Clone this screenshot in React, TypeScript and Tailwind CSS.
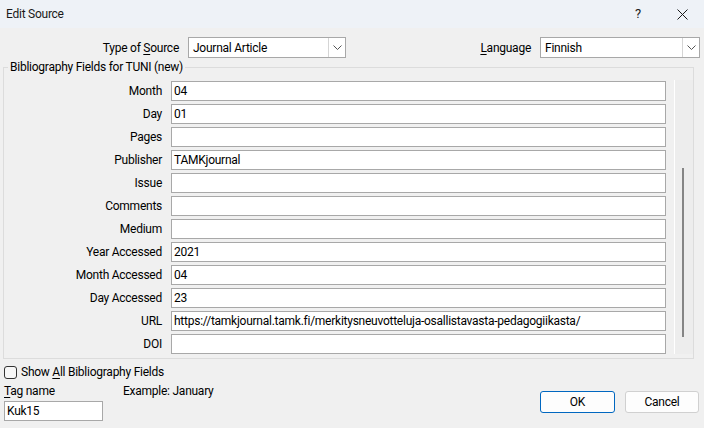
import React from "react";

const font = { fontFamily: 'Roboto, "Noto Sans", sans-serif' };

function Combo({ value, width }: { value: string; width: string }) {
  return (
    <div className={`${width} h-[21px] bg-white border border-[#a8a8a8] flex items-center`}>
      <div className="flex-1 pl-[4px] text-[12px] leading-[16px] text-black">{value}</div>
      <div className="w-[17px] h-[19px] border-l border-[#d5d5d5] flex items-center justify-center">
        <svg width="9" height="5" viewBox="0 0 9 5">
          <path d="M0.5 0.5 L4.5 4.5 L8.5 0.5" fill="none" stroke="#555" strokeWidth="1" />
        </svg>
      </div>
    </div>
  );
}

const rows: [string, string][] = [
  ["Month", "04"],
  ["Day", "01"],
  ["Pages", ""],
  ["Publisher", "TAMKjournal"],
  ["Issue", ""],
  ["Comments", ""],
  ["Medium", ""],
  ["Year Accessed", "2021"],
  ["Month Accessed", "04"],
  ["Day Accessed", "23"],
  ["URL", "https://tamkjournal.tamk.fi/merkitysneuvotteluja-osallistavasta-pedagogiikasta/"],
  ["DOI", ""],
];

export default function App() {
  return (
    <div className="w-[704px] h-[428px] bg-[#f0f0f0] flex flex-col text-[12px] leading-[16px] tracking-[-0.25px] text-black overflow-hidden" style={font}>
      {/* Title bar */}
      <div className="h-[28px] bg-[#eef2f7] flex items-center">
        <div className="pl-[6px] flex-1 text-[12px] text-[#1a1a1a]">Edit Source</div>
        <div className="w-[20px] text-center text-[13px] text-[#1a1a1a] mr-[24px]">?</div>
        <div className="w-[20px] flex items-center justify-center mr-[12px]">
          <svg width="11" height="11" viewBox="0 0 11 11">
            <path d="M0.5 0.5 L10.5 10.5 M10.5 0.5 L0.5 10.5" stroke="#1a1a1a" strokeWidth="1" />
          </svg>
        </div>
      </div>

      {/* Top row */}
      <div className="flex items-center mt-[9px] h-[21px]">
        <div className="w-[179px] text-right">
          Type of <span className="underline underline-offset-2">S</span>ource
        </div>
        <div className="ml-[9px]">
          <Combo value="Journal Article" width="w-[158px]" />
        </div>
        <div className="flex-1" />
        <div className="text-right">
          <span className="underline underline-offset-2">L</span>anguage
        </div>
        <div className="ml-[9px] mr-[4px]">
          <Combo value="Finnish" width="w-[160px]" />
        </div>
      </div>

      {/* Group box */}
      <div className="relative ml-[3px] mt-[9px] w-[691px] h-[292px] border border-[#dcdcdc] flex pt-[12px]">
        <div className="absolute left-[4px] -top-[9px] px-[2px] bg-[#f0f0f0]">Bibliography Fields for TUNI (new)</div>
        <div className="flex flex-col gap-[3px] pt-[1px]">
          {rows.map(([label, value]) => (
            <div key={label} className="flex items-center h-[20px]">
              <div className="w-[158px] text-right">{label}</div>
              <div className="ml-[9px] w-[495px] h-[20px] bg-white border border-[#a8a8a8] flex items-center pl-[2px] whitespace-nowrap overflow-hidden">
                {value}
              </div>
            </div>
          ))}
        </div>
        <div className="ml-[8px] w-[19px] h-[274px] border-l border-white bg-[#ededed] flex flex-col pt-[88px]">
          <div className="ml-[7px] w-[2px] h-[169px] bg-[#858585]" />
        </div>
      </div>

      {/* Bottom */}
      <div className="flex items-start">
        <div className="flex flex-col pl-[4px]">
          <div className="flex items-center h-[16px] mt-[5px]">
            <div className="w-[13px] h-[13px] border border-[#333] rounded-[3px] bg-[#f7f7f7]" />
            <div className="ml-[4px]">
              Show <span className="underline underline-offset-2">A</span>ll Bibliography Fields
            </div>
          </div>
          <div className="flex h-[16px] mt-[3px]">
            <div className="w-[119px]">
              <span className="underline underline-offset-2">T</span>ag name
            </div>
            <div>Example: January</div>
          </div>
          <div className="mt-[2px] w-[99px] h-[20px] bg-white border border-[#a8a8a8] flex items-center pl-[2px]">Kuk15</div>
        </div>
        <div className="flex-1" />
        <div className="flex mt-[32px] mr-[5px] gap-[10px]">
          <div className="w-[75px] h-[22px] rounded-[3px] border border-[#0067c0] bg-[#fdfdfd] flex items-center justify-center">OK</div>
          <div className="w-[74px] h-[22px] rounded-[3px] border border-[#d0d0d0] bg-[#fdfdfd] flex items-center justify-center">Cancel</div>
        </div>
      </div>
    </div>
  );
}
